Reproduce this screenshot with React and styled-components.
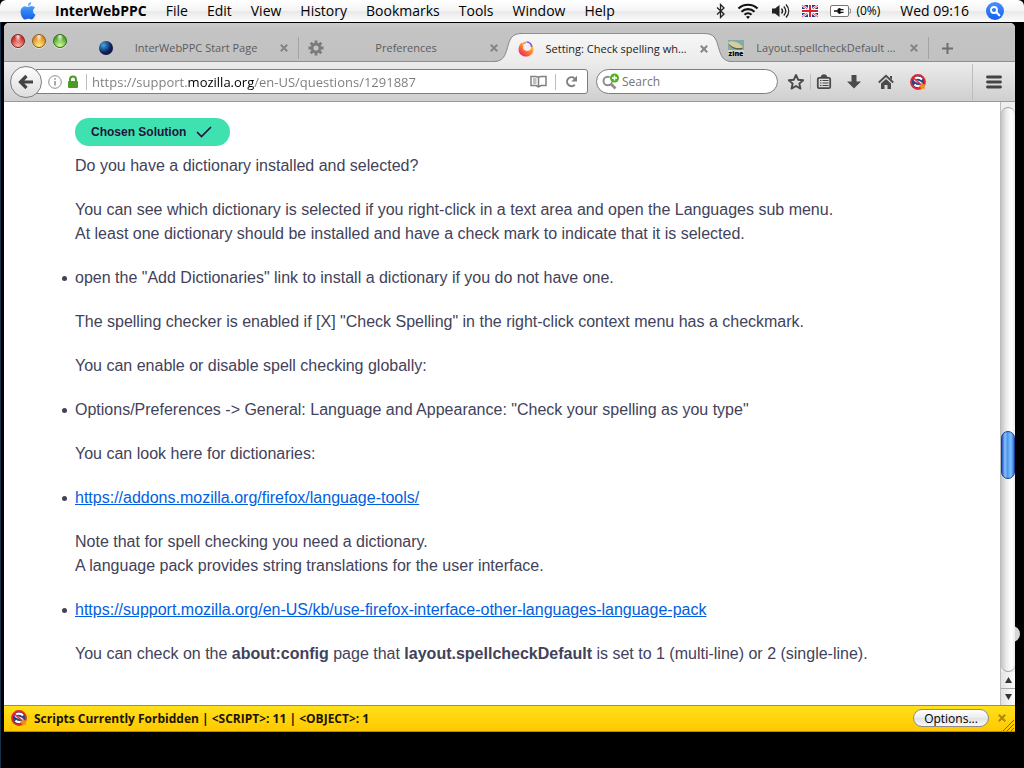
import React from "react";
import styled, { createGlobalStyle } from "styled-components";

const GlobalStyle = createGlobalStyle`
  * {
    box-sizing: border-box;
  }

  body {
    margin: 0;
    background: #000;
    font-family: "Open Sans", "Noto Sans", sans-serif;
  }

  button {
    padding: 0;
    border: 0;
    background: none;
    font: inherit;
    color: inherit;
  }

  svg {
    display: block;
    flex: none;
  }
`;

/* ---------- desktop and menu bar ---------- */

const Desktop = styled.div`
  display: flex;
  flex-direction: column;
  min-height: 100vh;
  background: #000;
`;

const MenuBar = styled.header`
  display: flex;
  align-items: center;
  justify-content: space-between;
  height: 22px;
  padding: 0 20px;
  border-radius: 6px 6px 0 0;
  background: linear-gradient(#fff, #f4f4f4 50%, #e9e9e9 52%, #fcfcfc);
  color: #000;
  font-size: 14px;
  line-height: 22px;
`;

const Menus = styled.nav`
  display: flex;
  align-items: center;
  gap: 19px;
`;

const MenuItem = styled.button`
  font-weight: ${props => (props.$app ? 700 : 400)};
  white-space: nowrap;
`;

const StatusItems = styled.div`
  display: flex;
  align-items: center;
  gap: 12px;
  white-space: nowrap;
`;

const Battery = styled.span`
  display: flex;
  align-items: center;
  gap: 5px;
  font-size: 12px;
`;

const Clock = styled.time`
  margin: 0 5px 0 8px;
`;

/* ---------- browser window ---------- */

const WindowArea = styled.div`
  position: relative;
  display: flex;
  flex: 1;
  padding: 1px 9px 36px 3px;
  border-left: 1px solid #16304f;
`;

/* desktop item peeking out from behind the window */
const DesktopItem = styled.div`
  position: absolute;
  right: 4px;
  bottom: 126px;
  width: 16px;
  height: 16px;
  border-radius: 50%;
  background: #d6d6d6;
`;

const BrowserWindow = styled.div`
  position: relative;
  display: flex;
  flex: 1;
  flex-direction: column;
  min-width: 0;
  border-radius: 5px 5px 0 0;
  background: #fff;
  overflow: hidden;
`;

const TabStrip = styled.div`
  display: flex;
  align-items: flex-end;
  height: 39px;
  border-bottom: 1px solid #8f8f8f;
  background: linear-gradient(#cdcdcd, #c4c4c4 6px, #c1c1c1);
`;

const Lights = styled.div`
  display: flex;
  flex: none;
  gap: 7px;
  width: 84px;
  padding: 0 0 13px 7px;
`;

const Light = styled.button`
  width: 14px;
  height: 14px;
  border: 1px solid ${props => props.$edge};
  border-radius: 50%;
  background: radial-gradient(
      ellipse at 50% 12%,
      rgba(255, 255, 255, 0.9),
      rgba(255, 255, 255, 0) 40%
    ),
    radial-gradient(
      circle at 50% 90%,
      ${props => props.$glow},
      ${props => props.$color} 70%
    );
  box-shadow: 0 1px 0 rgba(255, 255, 255, 0.5);
`;

const TabShell = styled.div`
  position: relative;
  display: flex;
  flex: 0 1 210px;
  align-items: center;
  min-width: 0;
  height: 28px;
  padding: 2px 8px 0 10px;
  color: ${props => (props.$active ? "#222" : "#5c5c5c")};

  ${props =>
    props.$active &&
    `
    z-index: 1;
    margin-bottom: -1px;
    height: 29px;
  `}

  &::after {
    content: "";
    position: absolute;
    right: -1px;
    top: 4px;
    width: 1px;
    height: 22px;
    background: ${props => (props.$divider ? "#a3a3a3" : "transparent")};
  }
`;

const TabShape = styled.div`
  position: absolute;
  inset: 0 -14px;
  z-index: -1;
  display: flex;
`;

const TabTop = styled.div`
  flex: 1;
  border-top: 1px solid #8f8f8f;
  background: linear-gradient(#f6f6f6, #ececec);
`;

const TabLabel = styled.button`
  flex: 1;
  min-width: 0;
  margin: 0 6px;
  overflow: hidden;
  font-size: 11px;
  line-height: 20px;
  text-align: center;
  text-overflow: ellipsis;
  white-space: nowrap;
`;

const IconButton = styled.button`
  display: flex;
  flex: none;
  align-items: center;
  justify-content: center;
  width: ${props => props.$width || 12}px;
  height: ${props => props.$height || 20}px;
`;

const NewTab = styled(IconButton)`
  margin: 0 0 3px 13px;
`;

/* ---------- toolbar ---------- */

const Toolbar = styled.div`
  display: flex;
  align-items: center;
  height: 40px;
  padding: 0 12px 0 6px;
  border-bottom: 1px solid #9b9b9b;
  background: linear-gradient(#ececec, #cfcfcf);
`;

const BackButton = styled.button`
  display: flex;
  z-index: 1;
  flex: none;
  align-items: center;
  justify-content: center;
  width: 32px;
  height: 32px;
  border: 1px solid #7d7d7d;
  border-radius: 50%;
  background: linear-gradient(#fdfdfd, #dedede);
`;

const UrlBar = styled.div`
  display: flex;
  flex: 1;
  align-items: center;
  min-width: 0;
  height: 25px;
  margin-left: -6px;
  padding: 0 9px 0 11px;
  border: 1px solid #7d7d7d;
  border-radius: 0 3px 3px 0;
  background: #fff;
`;

const SiteIdentity = styled.button`
  display: flex;
  flex: none;
  align-items: center;
  gap: 5px;
`;

/* the host part of the address is darker than the rest */
const UrlInput = styled.input`
  flex: 1;
  min-width: 0;
  padding: 0;
  border: 0;
  outline: 0;
  background: linear-gradient(
    to right,
    #7a7a7a 96px,
    #000 96px,
    #000 162px,
    #7a7a7a 162px
  );
  -webkit-background-clip: text;
  background-clip: text;
  color: transparent;
  font: 13px/20px "Open Sans", "Noto Sans", sans-serif;
`;

const Divider = styled.span`
  flex: none;
  width: 1px;
  height: ${props => props.$height || 16}px;
  margin: ${props => props.$margin || "0"};
  background: #bdbdbd;
`;

const SearchBox = styled.div`
  display: flex;
  flex: none;
  align-items: center;
  gap: 2px;
  width: 182px;
  height: 25px;
  margin: 0 9px 0 8px;
  padding: 0 10px 0 5px;
  border: 1px solid #7d7d7d;
  border-radius: 13px;
  background: #fff;
`;

const SearchInput = styled.input`
  flex: 1;
  min-width: 0;
  padding: 0;
  border: 0;
  outline: 0;
  background: none;
  font: 12px/20px "Open Sans", "Noto Sans", sans-serif;

  &::placeholder {
    color: #757575;
    opacity: 1;
  }
`;

/* ---------- page ---------- */

const Viewport = styled.div`
  display: flex;
  flex: 1;
`;

const Page = styled.main`
  flex: 1;
  min-width: 0;
  padding: 16px 71px 0;
  color: #42425a;
  font: 16px/24px "Liberation Sans", Arial, sans-serif;

  p {
    margin: 0 0 20px;
  }

  a {
    color: #0060df;
  }
`;

const List = styled.ul`
  margin: 0 0 20px -13px;
  padding: 0;
  list-style: none;
`;

const Item = styled.li`
  display: flex;
  align-items: center;
  gap: 8px;

  &::before {
    content: "";
    flex: none;
    width: 5px;
    height: 5px;
    border-radius: 50%;
    background: #42425a;
  }
`;

const Chosen = styled.div`
  display: flex;
  align-items: center;
  gap: 10px;
  width: fit-content;
  height: 28px;
  margin-bottom: 8px;
  padding: 0 18px 0 16px;
  border-radius: 14px;
  background: #3fe1b0;
  color: #20123a;
  font-size: 12px;
  font-weight: 700;
`;

const Scrollbar = styled.div`
  display: flex;
  flex: none;
  flex-direction: column;
  width: 15px;
  border-left: 1px solid #bcbcbc;
  background: #eee;
`;

const Track = styled.div`
  display: flex;
  flex: 1;
  flex-direction: column;
  margin-top: 5px;
  border: 1px solid #a2a2a2;
  border-width: 1px 0;
  border-radius: 7px;
  background: linear-gradient(to right, #c4c4c4, #ececec 40%, #fff 75%, #ececec);
`;

const Spacer = styled.div`
  flex: ${props => props.$grow};
`;

const Thumb = styled.div`
  height: 48px;
  border: 1px solid #1b3c93;
  border-radius: 7px;
  background: linear-gradient(
    to right,
    #1c55c8,
    #8fc0f6 25%,
    #4c97ee 45%,
    #7cc4fc 75%,
    #2a68d8
  );
`;

const ScrollArrow = styled(IconButton)`
  border-top: ${props => (props.$line ? "1px solid #a8a8a8" : "0")};
  background: linear-gradient(to right, #e2e2e2, #fdfdfd);
`;

const Notice = styled.footer`
  position: relative;
  display: flex;
  align-items: center;
  height: 27px;
  padding: 0 7px 1px;
  border: 1px solid #b98d00;
  border-width: 1px 0;
  background: linear-gradient(#ffe11a, #ffc800);
  color: #1a1400;
  font-size: 12px;
  font-weight: 700;
`;

const NoticeText = styled.span`
  flex: 1;
  margin-left: 7px;
`;

const OptionsButton = styled.button`
  width: 76px;
  height: 18px;
  margin-right: 7px;
  border: 1px solid #8d8d8d;
  border-radius: 9px;
  background: linear-gradient(#fff, #ececec 50%, #e2e2e2 51%, #f8f8f8);
  color: #000;
  font-size: 12px;
  font-weight: 400;
  line-height: 15px;
`;

const Grip = styled.svg`
  position: absolute;
  right: 1px;
  bottom: 0;
`;

/* ---------- drawings ---------- */

const AppleLogo = () => (
  <svg width="16" height="20" viewBox="0 0 16 20">
    <defs>
      <linearGradient id="apple" x1="0" y1="0" x2="0" y2="1">
        <stop offset="0" stopColor="#6db4ff" />
        <stop offset="0.5" stopColor="#3186f7" />
        <stop offset="1" stopColor="#1c5ee0" />
      </linearGradient>
    </defs>
    <path
      fill="url(#apple)"
      d="M11.3 1c.1 2-1.500 3.800-3.400 3.900C7.700 3 9.400 1.200 11.300 1zM8.200 6c.8 0 1.900-1 3.600-.9 1.300.1 2.500.7 3.200 1.700-2.800 1.700-2.400 5.500.5 6.700-.6 1.800-2.300 4.900-4.100 5-1.200 0-1.600-.7-3-.7s-1.900.7-3 .7C3.300 18.500.6 14.500.6 10.900.6 7.300 2.900 5.300 5.100 5.200 6.400 5.200 7.500 6 8.200 6z"
    />
  </svg>
);

const Bluetooth = () => (
  <svg width="9" height="16" viewBox="0 0 9 16">
    <path
      d="M1 4.500l7 6.500-3.500 3.500v-13L8 5l-7 6.500"
      fill="none"
      stroke="#222"
      strokeWidth="1.300"
    />
  </svg>
);

const Wifi = () => (
  <svg width="22" height="16" viewBox="0 0 22 16">
    <g fill="none" stroke="#111" strokeWidth="2.200">
      <path d="M1.500 5.500c5.300-5 13.700-5 19 0" />
      <path d="M4.500 8.700c3.700-3.400 9.300-3.400 13 0" />
      <path d="M7.500 11.700c2-1.800 5-1.800 7 0" />
    </g>
    <path d="M11 16l-2-2.200c1.200-1 2.800-1 4 0z" fill="#111" />
  </svg>
);

const Volume = () => (
  <svg width="19" height="16" viewBox="0 0 19 16">
    <path d="M1 5.500h3L8.500 2v12L4 10.500H1z" fill="#222" />
    <g fill="none" stroke="#222" strokeWidth="1.300">
      <path d="M10.500 5.500c1.300 1.500 1.300 3.500 0 5" />
      <path d="M12.800 3.500c2.400 2.700 2.400 6.300 0 9" />
      <path d="M15 1.500c3.600 4 3.600 9 0 13" />
    </g>
  </svg>
);

const Flag = () => (
  <svg width="16" height="12" viewBox="0 0 16 12">
    <rect width="16" height="12" fill="#1d3a8c" />
    <path d="M0 0l16 12M16 0L0 12" stroke="#fff" strokeWidth="2.400" />
    <path d="M0 0l16 12M16 0L0 12" stroke="#d9222e" strokeWidth="0.800" />
    <path d="M8 0v12M0 6h16" stroke="#fff" strokeWidth="4" />
    <path d="M8 0v12M0 6h16" stroke="#d9222e" strokeWidth="2" />
  </svg>
);

const BatteryIcon = () => (
  <svg width="21" height="12" viewBox="0 0 21 12">
    <rect x="0.500" y="0.500" width="18" height="11" rx="1.500" fill="#fff" stroke="#777" />
    <path d="M19 4h1.500v4H19" fill="none" stroke="#999" />
    <path d="M4 5.300h3.500V4.200C8.500 3.200 9.500 3 10.500 3v1h3v1.200h-3v1.600h3V8h-3v1c-1 0-2-.2-3-1.200V6.700H4z" fill="#111" />
  </svg>
);

const Spotlight = () => (
  <svg width="18" height="18" viewBox="0 0 18 18">
    <defs>
      <linearGradient id="spot" x1="0" y1="0" x2="0" y2="1">
        <stop offset="0" stopColor="#4a90ff" />
        <stop offset="1" stopColor="#1561ee" />
      </linearGradient>
    </defs>
    <circle cx="9" cy="9" r="9" fill="url(#spot)" />
    <circle cx="8" cy="8" r="3" fill="none" stroke="#fff" strokeWidth="1.800" />
    <path d="M10.300 10.300l3 3" stroke="#fff" strokeWidth="2.200" strokeLinecap="round" />
  </svg>
);

const Globe = () => (
  <svg width="16" height="16" viewBox="0 0 16 16">
    <defs>
      <radialGradient id="globe" cx="0.320" cy="0.300" r="0.750">
        <stop offset="0" stopColor="#4aa6d8" />
        <stop offset="0.400" stopColor="#1d5a9c" />
        <stop offset="0.700" stopColor="#14205c" />
        <stop offset="1" stopColor="#0f1440" />
      </radialGradient>
    </defs>
    <circle cx="8" cy="8" r="7" fill="url(#globe)" />
  </svg>
);

const Gear = () => (
  <svg width="16" height="16" viewBox="0 0 16 16">
    <g stroke="#7a7a7a" strokeWidth="2.800">
      <path d="M8 0.500v15M0.500 8h15M2.700 2.700l10.600 10.600M13.300 2.700L2.700 13.300" />
    </g>
    <circle cx="8" cy="8" r="5.200" fill="#7a7a7a" />
    <circle cx="8" cy="8" r="2.600" fill="#c3c3c3" />
  </svg>
);

const FirefoxLogo = () => (
  <svg width="16" height="16" viewBox="0 0 16 16">
    <defs>
      <linearGradient id="fox" x1="0.900" y1="0.100" x2="0.200" y2="0.950">
        <stop offset="0" stopColor="#ffd83a" />
        <stop offset="0.450" stopColor="#ff8a2a" />
        <stop offset="1" stopColor="#f4206a" />
      </linearGradient>
    </defs>
    <path
      d="M4.200 1.200C2 2.600.5 5.300.5 8.300.5 12.500 3.800 15.600 8 15.600s7.500-3.100 7.500-7.300c0-2.400-.9-4.600-2.600-6 .9 2 .9 4.200-.2 5.800-1.200 1.900-3.600 2.500-5.400 1.500C5 8.600 4.600 6.600 5.700 5 4.700 4.300 4.100 2.300 4.200 1.200z"
      fill="url(#fox)"
    />
    <path d="M8.500 1c3-.2 5.500 2.300 5 5.200" fill="none" stroke="#8a4df5" strokeWidth="1.600" />
    <path d="M4.500 3.200c.9-1 2.100-1.500 3.500-1.600" fill="none" stroke="#ff9a2e" strokeWidth="1.600" />
  </svg>
);

const ZineLogo = () => (
  <svg width="16" height="16" viewBox="0 0 16 16">
    <rect width="16" height="10" fill="#86a9a8" />
    <rect y="10" width="16" height="6" fill="#d2d2d2" />
    <path d="M0 2c4-2 11 0 15.500 5.500C10 9.500 3 7.500 0 2z" fill="#d5cf9c" />
    <path d="M1 4c3 4 9 5 14.500 3.500L13 9.500C8 10 3 8.500 1 4z" fill="#55603a" />
    <text x="8" y="15.500" textAnchor="middle" fontSize="7" fontWeight="800" fill="#000">
      zine
    </text>
  </svg>
);

const Close = ({ color = "#858585" }) => (
  <svg width="8" height="8" viewBox="0 0 8 8">
    <path d="M0.800 0.800l6.400 6.400M7.200 0.800L0.800 7.200" stroke={color} strokeWidth="2" />
  </svg>
);

const TabEdge = ({ flip }) => (
  <svg
    width="28"
    height="29"
    viewBox="0 0 28 29"
    transform={flip ? "scale(-1 1)" : undefined}
  >
    <defs>
      <linearGradient id={flip ? "edgeR" : "edgeL"} x1="0" y1="0" x2="0" y2="1">
        <stop offset="0" stopColor="#f6f6f6" />
        <stop offset="1" stopColor="#ececec" />
      </linearGradient>
    </defs>
    <path
      d="M0 28.500C9 28.500 11 23 13.500 14.500 16 5 18 .5 28 .5V29H0z"
      fill={`url(#${flip ? "edgeR" : "edgeL"})`}
    />
    <path
      d="M0 28.500C9 28.500 11 23 13.500 14.500 16 5 18 .5 28 .5"
      fill="none"
      stroke="#858585"
    />
  </svg>
);

const NoScript = () => (
  <svg width="16" height="16" viewBox="0 0 16 16">
    <circle cx="8" cy="8" r="7" fill="#27448f" />
    <path
      d="M12 5.500C10 3.200 4.800 3 4.800 5.600c0 2.400 6.600 2 6.600 4.600 0 2.300-4.700 2.500-7 .4"
      fill="none"
      stroke="#fff"
      strokeWidth="2.200"
    />
    <circle cx="8" cy="8" r="7" fill="none" stroke="#e0282e" strokeWidth="1.900" />
    <path d="M3 3.500l9.500 8.500" stroke="#e0282e" strokeWidth="1.600" />
    <path d="M12 8l1 2.300 2.700-.1-1.500 2.200 1.300 2.400-2.600-.3L11 16l-.4-2.500L8.300 12l2.400-.9z" fill="#f08a24" />
  </svg>
);

const Plus = () => (
  <svg width="11" height="11" viewBox="0 0 11 11">
    <path d="M5.500 0v11M0 5.500h11" stroke="#6e6e6e" strokeWidth="2" />
  </svg>
);

const BackArrow = () => (
  <svg width="16" height="16" viewBox="0 0 16 16">
    <path d="M8.500 2L2.500 8l6 6M3 8h12" fill="none" stroke="#444" strokeWidth="3.200" />
  </svg>
);

const Info = () => (
  <svg width="14" height="14" viewBox="0 0 14 14">
    <circle cx="7" cy="7" r="6.300" fill="none" stroke="#8d8d8d" />
    <path d="M7 6v4.500M7 3.200v1.600" stroke="#8d8d8d" strokeWidth="1.500" />
  </svg>
);

const Lock = () => (
  <svg width="12" height="14" viewBox="0 0 12 14">
    <path d="M3 7V4.500a3 3 0 016 0V7" fill="none" stroke="#4b9b26" strokeWidth="2" />
    <rect x="1" y="6" width="10" height="7" rx="1" fill="#4b9b26" />
  </svg>
);

const Reader = () => (
  <svg width="17" height="13" viewBox="0 0 17 13">
    <path
      d="M8.500 2.500C7.500 1.500 6.500 1.500 5.500 1.500H1v9h5l2.500 1.500L11 10.500h5v-9h-4.500c-1 0-2 0-3 1zv9"
      fill="none"
      stroke="#808080"
      strokeWidth="1.500"
    />
    <path d="M3 4h3.500M3 6h3.500M3 8h3.500" stroke="#808080" />
  </svg>
);

const Reload = () => (
  <svg width="13" height="13" viewBox="0 0 13 13">
    <path d="M9.800 9.800A4.500 4.500 0 119.500 3.200" fill="none" stroke="#808080" strokeWidth="2" />
    <path d="M12 0.800v5.700H6.300z" fill="#808080" />
  </svg>
);

const SearchIcon = () => (
  <svg width="18" height="18" viewBox="0 0 18 18">
    <circle cx="5.800" cy="8" r="4.300" fill="none" stroke="#8d8d8d" strokeWidth="2" />
    <path d="M9 11l4.500 4.500" stroke="#8d8d8d" strokeWidth="2.600" />
    <circle cx="12.500" cy="5" r="5" fill="#fff" />
    <circle cx="12.500" cy="5" r="4.500" fill="#50b01f" />
    <path d="M12.500 2.500v5M10 5h5" stroke="#fff" strokeWidth="1.400" />
  </svg>
);

const Star = () => (
  <svg width="18" height="18" viewBox="0 0 18 18">
    <path
      d="M9 2l2.100 4.700 5.100.5-3.900 3.400 1.200 5L9 13l-4.500 2.600 1.200-5-3.900-3.400 5.100-.5z"
      fill="none"
      stroke="#4a4a4a"
      strokeWidth="1.900"
      strokeLinejoin="round"
    />
  </svg>
);

const Clipboard = () => (
  <svg width="16" height="16" viewBox="0 0 16 16">
    <rect x="1.800" y="3.800" width="12.400" height="10.400" rx="1.500" fill="none" stroke="#4a4a4a" strokeWidth="1.800" />
    <path d="M4.500 4c0-5 7-5 7 0z" fill="#4a4a4a" />
    <path d="M6.500 6.500h6M6.500 9h6M6.500 11.500h6M4 6.500h1.500M4 9h1.500M4 11.500h1.500" stroke="#4a4a4a" strokeWidth="1.200" />
  </svg>
);

const Download = () => (
  <svg width="16" height="16" viewBox="0 0 16 16">
    <path d="M5.500 1h5v6.500H15l-7 7-7-7h4.500z" fill="#4a4a4a" />
  </svg>
);

const Home = () => (
  <svg width="16" height="16" viewBox="0 0 16 16">
    <path d="M0.800 8.500L8 1.800l7.200 6.700" fill="none" stroke="#4a4a4a" strokeWidth="1.800" />
    <path d="M12 2h2v4l-2-2z" fill="#4a4a4a" />
    <path d="M3 9.500l5-4.500 5 4.500V15H9.500v-4h-3v4H3z" fill="#4a4a4a" />
  </svg>
);

const Hamburger = () => (
  <svg width="16" height="14" viewBox="0 0 16 14">
    <path d="M1.500 2h13M1.500 7h13M1.500 12h13" stroke="#444" strokeWidth="2.800" strokeLinecap="round" />
  </svg>
);

const Check = () => (
  <svg width="16" height="12" viewBox="0 0 16 12">
    <path d="M1.500 6.500l4 4L14.500 1.500" fill="none" stroke="#20123a" strokeWidth="1.700" strokeLinecap="round" />
  </svg>
);

const Arrow = ({ down }) => (
  <svg width="7" height="6" viewBox="0 0 7 6">
    <path d={down ? "M0 0h7L3.500 6z" : "M0 6h7L3.500 0z"} fill="#333" />
  </svg>
);

/* ---------- content ---------- */

const menus = [
  "File",
  "Edit",
  "View",
  "History",
  "Bookmarks",
  "Tools",
  "Window",
  "Help"
];

const lights = [
  { name: "Close", edge: "#7b2420", color: "#c8312b", glow: "#ffb3a8" },
  { name: "Minimise", edge: "#8a5a14", color: "#e08a1c", glow: "#fff08a" },
  { name: "Zoom", edge: "#2f6a1c", color: "#4fa52a", glow: "#d6ff9a" }
];

const tabs = [
  { title: "InterWebPPC Start Page", icon: <Globe />, divider: true },
  { title: "Preferences", icon: <Gear /> },
  { title: "Setting: Check spelling wh…", icon: <FirefoxLogo />, active: true },
  { title: "Layout.spellcheckDefault …", icon: <ZineLogo />, divider: true }
];

const Tab = ({ title, icon, active, divider }) => (
  <TabShell $active={active} $divider={divider}>
    {active && (
      <TabShape>
        <TabEdge />
        <TabTop />
        <TabEdge flip />
      </TabShape>
    )}
    {icon}
    <TabLabel>{title}</TabLabel>
    <IconButton aria-label={`Close ${title}`}>
      <Close />
    </IconButton>
  </TabShell>
);

const Answer = () => (
  <Page>
    <Chosen>
      Chosen Solution
      <Check />
    </Chosen>
    <p>Do you have a dictionary installed and selected?</p>
    <p>
      You can see which dictionary is selected if you right-click in a text
      area and open the Languages sub menu.
      <br />
      At least one dictionary should be installed and have a check mark to
      indicate that it is selected.
    </p>
    <List>
      <Item>
        open the "Add Dictionaries" link to install a dictionary if you do not
        have one.
      </Item>
    </List>
    <p>
      The spelling checker is enabled if [X] "Check Spelling" in the
      right-click context menu has a checkmark.
    </p>
    <p>You can enable or disable spell checking globally:</p>
    <List>
      <Item>
        Options/Preferences -&gt; General: Language and Appearance: "Check your
        spelling as you type"
      </Item>
    </List>
    <p>You can look here for dictionaries:</p>
    <List>
      <Item>
        <a href="https://addons.mozilla.org/firefox/language-tools/">
          https://addons.mozilla.org/firefox/language-tools/
        </a>
      </Item>
    </List>
    <p>
      Note that for spell checking you need a dictionary.
      <br />A language pack provides string translations for the user interface.
    </p>
    <List>
      <Item>
        <a href="https://support.mozilla.org/en-US/kb/use-firefox-interface-other-languages-language-pack">
          https://support.mozilla.org/en-US/kb/use-firefox-interface-other-languages-language-pack
        </a>
      </Item>
    </List>
    <p>
      You can check on the <b>about:config</b> page that{" "}
      <b>layout.spellcheckDefault</b> is set to 1 (multi-line) or 2
      (single-line).
    </p>
  </Page>
);

const App = () => (
  <Desktop>
    <GlobalStyle />
    <MenuBar>
      <Menus>
        <IconButton $width={16} aria-label="Apple menu">
          <AppleLogo />
        </IconButton>
        <MenuItem $app>InterWebPPC</MenuItem>
        {menus.map(name => (
          <MenuItem key={name}>{name}</MenuItem>
        ))}
      </Menus>
      <StatusItems>
        <Bluetooth />
        <Wifi />
        <Volume />
        <Flag />
        <Battery>
          <BatteryIcon />
          (0%)
        </Battery>
        <Clock>Wed 09:16</Clock>
        <IconButton $width={18} aria-label="Spotlight">
          <Spotlight />
        </IconButton>
      </StatusItems>
    </MenuBar>

    <WindowArea>
      <DesktopItem />
      <BrowserWindow>
        <TabStrip>
          <Lights>
            {lights.map(({ name, edge, color, glow }) => (
              <Light
                key={name}
                aria-label={`${name} window`}
                $edge={edge}
                $color={color}
                $glow={glow}
              />
            ))}
          </Lights>
          {tabs.map(tab => (
            <Tab key={tab.title} {...tab} />
          ))}
          <NewTab aria-label="New tab">
            <Plus />
          </NewTab>
        </TabStrip>

        <Toolbar>
          <BackButton aria-label="Back">
            <BackArrow />
          </BackButton>
          <UrlBar>
            <SiteIdentity aria-label="Site identity">
              <Info />
              <Lock />
            </SiteIdentity>
            <Divider $margin="0 5px 0 7px" />
            <UrlInput
              aria-label="Address"
              defaultValue="https://support.mozilla.org/en-US/questions/1291887"
            />
            <IconButton $width={17} aria-label="Reader view">
              <Reader />
            </IconButton>
            <Divider $margin="0 9px 0 8px" />
            <IconButton $width={13} aria-label="Reload">
              <Reload />
            </IconButton>
          </UrlBar>
          <SearchBox>
            <SearchIcon />
            <SearchInput aria-label="Search" placeholder="Search" />
          </SearchBox>
          <IconButton $width={18} aria-label="Bookmark this page">
            <Star />
          </IconButton>
          <Divider $margin="0 0 0 5px" />
          <IconButton $width={26} aria-label="Bookmarks">
            <Clipboard />
          </IconButton>
          <IconButton $width={34} aria-label="Downloads">
            <Download />
          </IconButton>
          <IconButton $width={30} aria-label="Home">
            <Home />
          </IconButton>
          <IconButton $width={34} aria-label="NoScript">
            <NoScript />
          </IconButton>
          <Divider $margin="0 12px 0 37px" $height={36} />
          <IconButton $width={18} aria-label="Open menu">
            <Hamburger />
          </IconButton>
        </Toolbar>

        <Viewport>
          <Answer />
          <Scrollbar>
            <Track>
              <Spacer $grow={324} />
              <Thumb />
              <Spacer $grow={192} />
            </Track>
            <ScrollArrow $width={14} $height={16} aria-label="Scroll up">
              <Arrow />
            </ScrollArrow>
            <ScrollArrow $width={14} $height={17} $line aria-label="Scroll down">
              <Arrow down />
            </ScrollArrow>
          </Scrollbar>
        </Viewport>

        <Notice>
          <NoScript />
          <NoticeText>
            Scripts Currently Forbidden | &lt;SCRIPT&gt;: 11 | &lt;OBJECT&gt;: 1
          </NoticeText>
          <OptionsButton>Options...</OptionsButton>
          <IconButton aria-label="Dismiss">
            <Close color="#a88a10" />
          </IconButton>
          <Grip width="11" height="11" viewBox="0 0 11 11">
            <path d="M0 11L11 0M4 11l7-7M8 11l3-3" stroke="#8a6a00" />
          </Grip>
        </Notice>
      </BrowserWindow>
    </WindowArea>
  </Desktop>
);

export default App;
